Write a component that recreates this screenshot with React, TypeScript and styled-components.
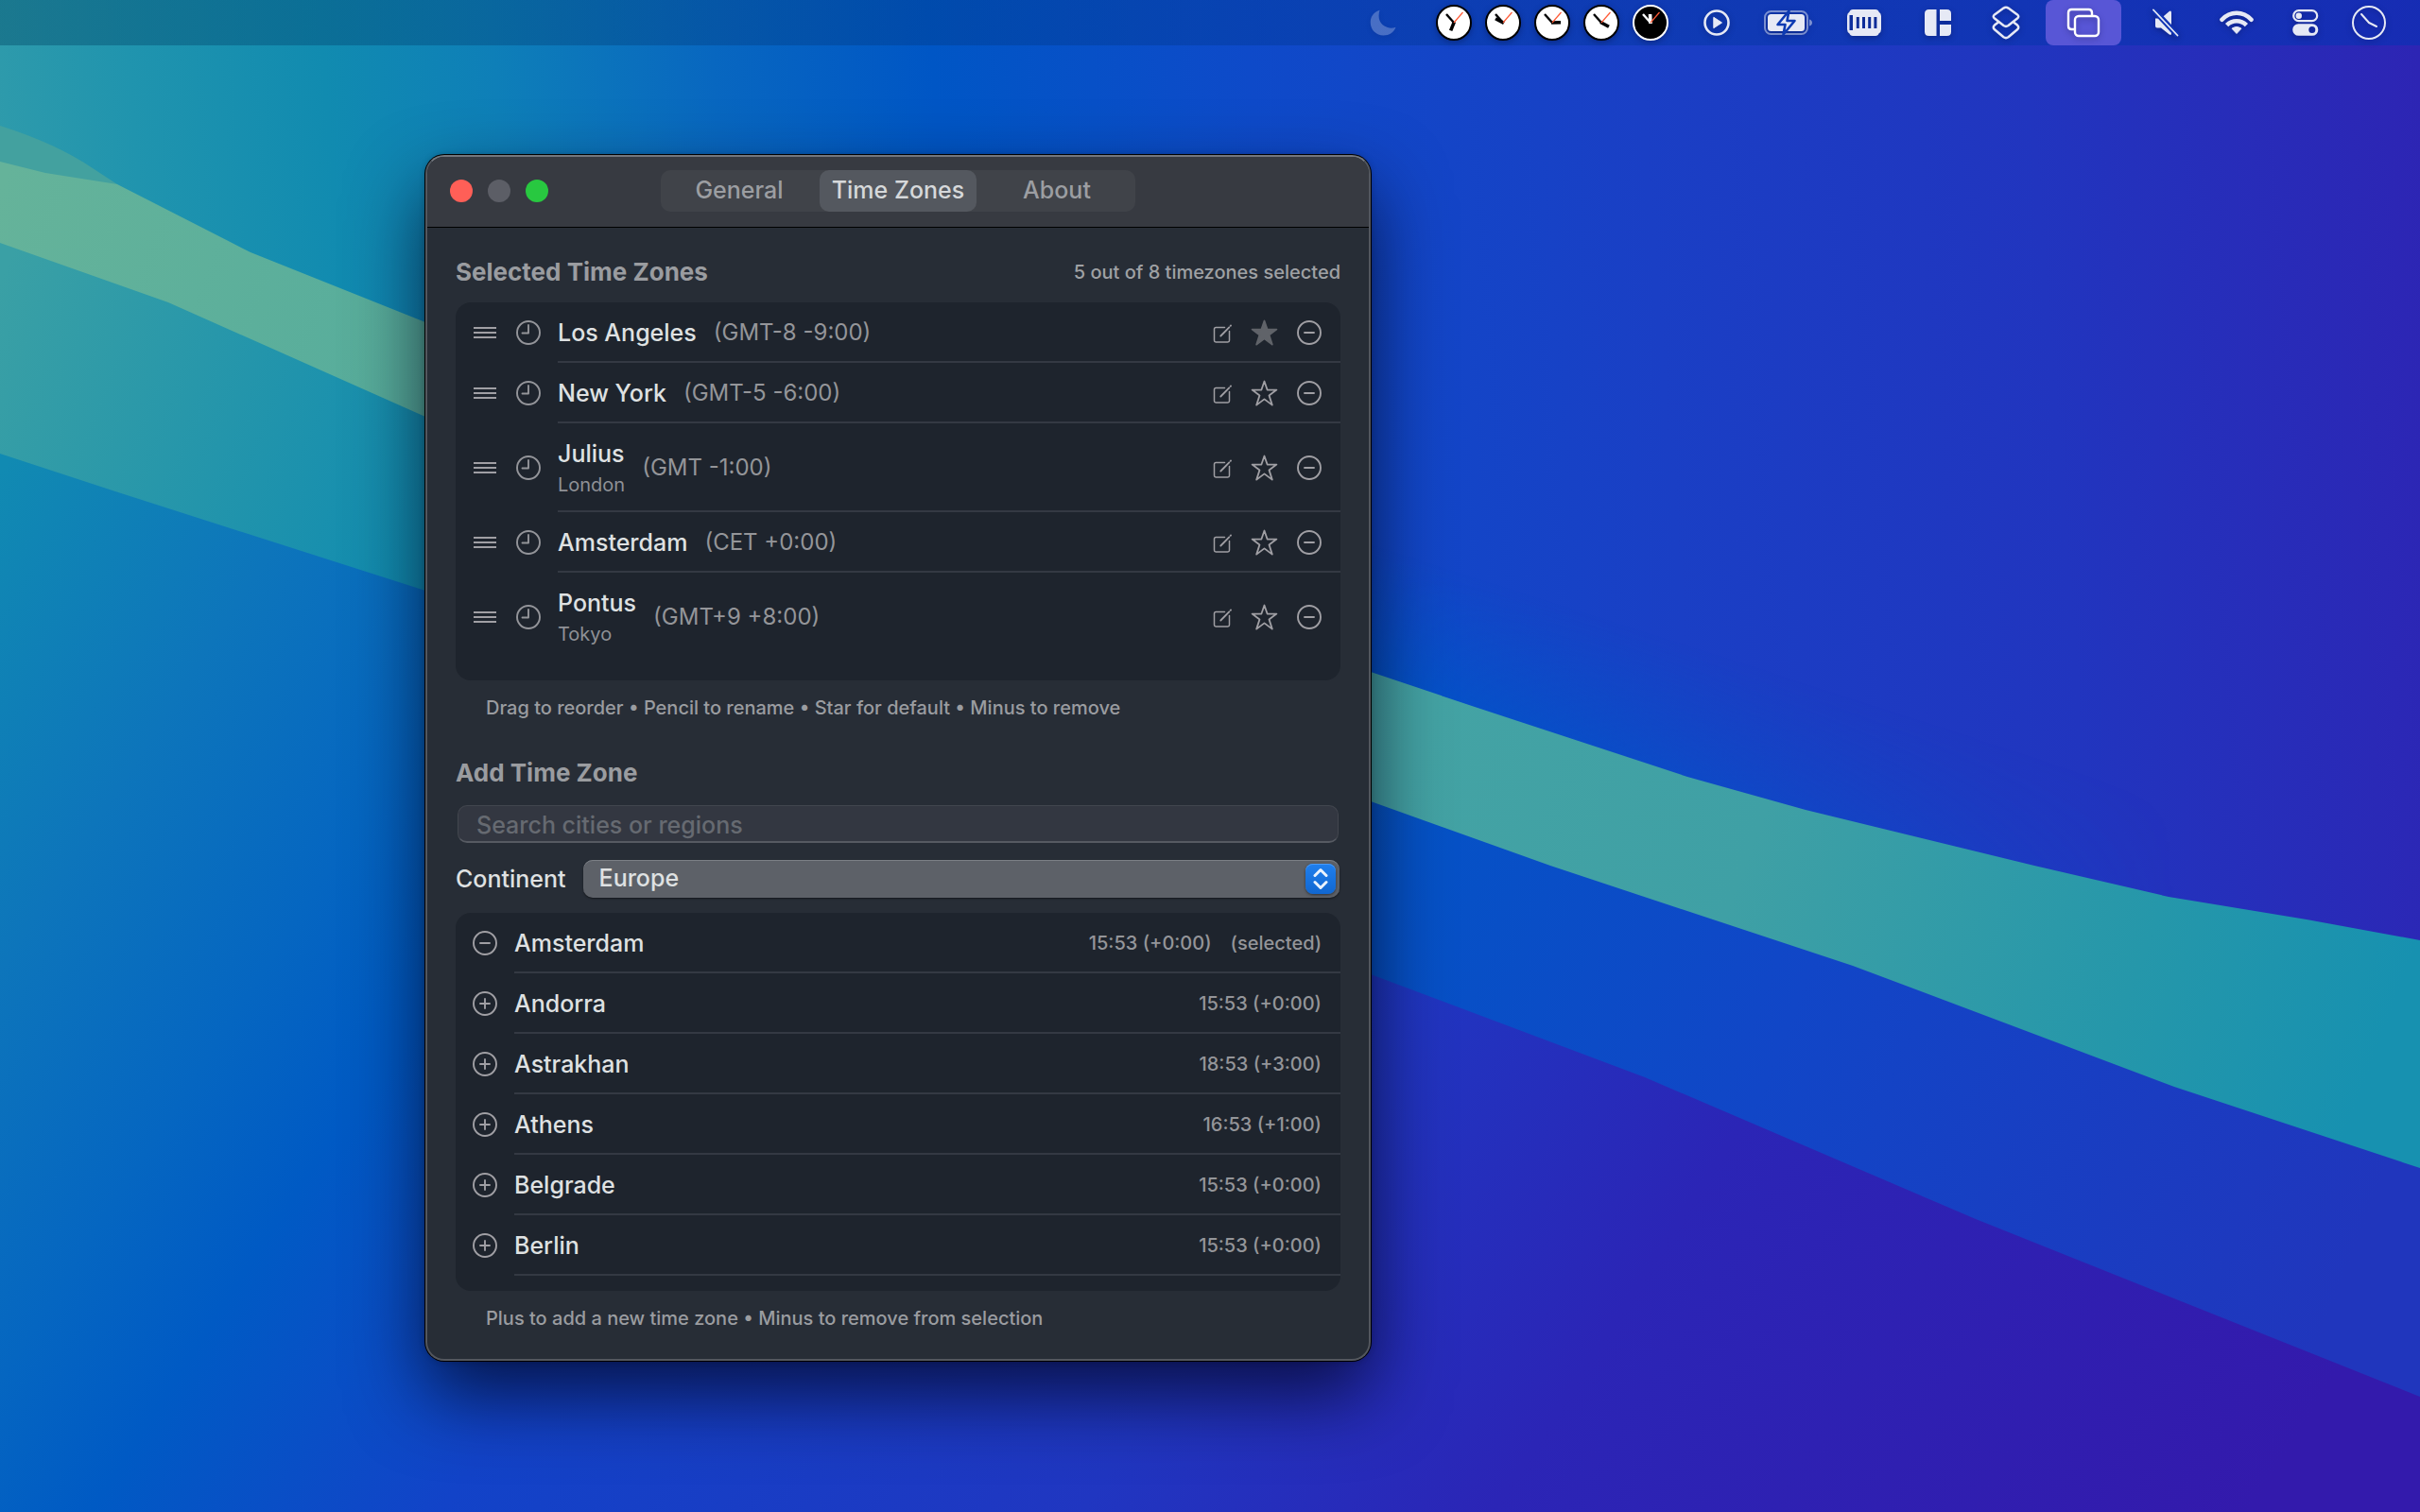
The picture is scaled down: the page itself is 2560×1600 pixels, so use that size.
import React, { useState } from "react";
import styled, { createGlobalStyle } from "styled-components";

const GlobalStyle = createGlobalStyle`
  *, *::before, *::after { box-sizing: border-box; }
  html, body { margin: 0; padding: 0; }
  body {
    font-family: Inter, "Noto Sans", sans-serif;
    font-weight: 500;
    color: #dfe1e2;
    background: #1243c8;
    -webkit-font-smoothing: antialiased;
  }
  button, input, select { font: inherit; color: inherit; margin: 0; }
`;

const Desktop = styled.div`
  position: relative;
  min-height: 100vh;
  overflow: hidden;
`;

const WallpaperArt = styled.svg`
  position: absolute;
  inset: 0;
  width: 100%;
  height: 100%;
`;

const MenuBar = styled.header`
  position: relative;
  display: flex;
  justify-content: flex-end;
  height: 48px;
  padding-right: 18px;
  background: linear-gradient(90deg, rgba(0, 70, 100, 0.4), rgba(0, 56, 120, 0.35) 30%, rgba(0, 52, 180, 0.5));
`;

const MenuItem = styled.button<{ $width: number; $dim?: boolean }>`
  display: flex;
  align-items: center;
  justify-content: center;
  width: ${(p) => p.$width}px;
  height: 48px;
  padding: 0;
  border: 0;
  background: none;
  color: #e6e9f5;
  opacity: ${(p) => (p.$dim ? 0.28 : 1)};

  svg {
    filter: drop-shadow(0 2px 3px rgba(0, 0, 30, 0.3));
  }
`;

const ActiveMenuItem = styled(MenuItem)`
  margin: 0 14px;
  border-radius: 8px;
  background: #5856d6;
  color: #fff;
`;

const ClockGroup = styled.div`
  display: flex;
  margin-right: 14px;
`;

const Window = styled.main`
  position: absolute;
  left: 450px;
  top: 164px;
  width: 1000px;
  overflow: hidden;
  border: 2px solid #53575e;
  border-top-color: #74777d;
  border-radius: 20px;
  background: #272d36;
  box-shadow: 0 0 0 1px #000, 0 0 6px rgba(0, 0, 0, 0.25), 0 36px 80px rgba(0, 0, 20, 0.7);
`;

const Toolbar = styled.div`
  display: grid;
  grid-template-columns: 1fr auto 1fr;
  align-items: center;
  height: 75px;
  padding: 0 24px 2px;
  border-bottom: 1px solid #000;
  background: #373a41;
`;

const TrafficLights = styled.div`
  display: flex;
  gap: 16px;
`;

const TrafficLight = styled.button<{ $color: string }>`
  width: 24px;
  height: 24px;
  padding: 0;
  border: 0;
  border-radius: 50%;
  background: ${(p) => p.$color};
`;

const Tabs = styled.div`
  display: grid;
  grid-template-columns: repeat(3, 166px);
  gap: 2px;
  height: 44px;
  border-radius: 10px;
  background: #404349;
`;

const Tab = styled.button<{ $active: boolean }>`
  padding: 0 0 2px;
  border: 0;
  border-radius: 10px;
  background: ${(p) => (p.$active ? "#54585f" : "none")};
  color: ${(p) => (p.$active ? "#d6d8da" : "#9c9ea2")};
  font-size: 25px;
  line-height: 32px;
  white-space: nowrap;
`;

const Content = styled.div`
  padding: 31px 30px 30px;
`;

const SectionHeader = styled.div`
  display: flex;
  align-items: center;
  justify-content: space-between;
  margin-bottom: 16px;
`;

const SectionTitle = styled.h2`
  margin: 0;
  font-size: 26px;
  line-height: 32px;
  font-weight: 700;
  color: #9a9ca0;
`;

const Caption = styled.span`
  font-size: 20px;
  line-height: 26px;
  color: #9fa1a4;
`;

const Hint = styled.p`
  margin: 16px 0 0;
  padding-left: 32px;
  font-size: 20px;
  line-height: 26px;
  color: #9a9ca0;
`;

const AddSection = styled.section`
  margin-top: 40px;
`;

const List = styled.ul`
  min-height: 400px;
  margin: 0;
  padding: 0;
  overflow: hidden;
  list-style: none;
  border-radius: 16px;
  background: #1e242d;
`;

const Row = styled.li`
  display: flex;
  align-items: stretch;
  gap: 18px;
  padding-left: 18px;
`;

const RowLead = styled.div`
  display: flex;
  align-items: center;
  gap: 20px;
`;

const RowBody = styled.div<{ $divider: boolean }>`
  display: flex;
  flex: 1;
  align-items: center;
  min-height: 64px;
  padding: 16px 20px 16px 0;
  box-shadow: ${(p) => (p.$divider ? "inset 0 -2px 0 #343943" : "none")};
`;

const ZoneLabel = styled.div`
  display: grid;
  gap: 4px;
  margin-right: 18px;
`;

const ZoneName = styled.span`
  font-size: 25px;
  line-height: 32px;
`;

const ZonePlace = styled.span`
  font-size: 20px;
  line-height: 26px;
  font-weight: 400;
  color: #8f9196;
`;

const ZoneOffset = styled.span`
  font-size: 24px;
  line-height: 32px;
  font-weight: 400;
  color: #949599;
`;

const RowActions = styled.div`
  display: flex;
  align-items: center;
  gap: 20px;
  margin-left: auto;
`;

const Times = styled(RowActions)`
  font-size: 20px;
  line-height: 26px;
  color: #949599;
`;

const IconButton = styled.button<{ $muted?: boolean }>`
  display: flex;
  padding: 0;
  border: 0;
  background: none;
  color: ${(p) => (p.$muted ? "#606369" : "#a09fa4")};
`;

const ClockBadge = styled.span`
  display: flex;
  color: #94959a;
`;

const SearchField = styled.input`
  display: block;
  width: calc(100% - 4px);
  height: 40px;
  margin: 18px 2px;
  padding: 2px 19px 0;
  border: 1px solid #42464e;
  border-bottom: 2px solid #565a62;
  border-radius: 10px;
  outline: 0;
  background: #333741;
  font-size: 25px;

  &::placeholder {
    color: #666a71;
    opacity: 1;
  }
`;

const ContinentRow = styled.div`
  display: flex;
  align-items: center;
  gap: 18px;
  margin: 0 1px 16px 0;
`;

const FieldLabel = styled.label`
  font-size: 25px;
  line-height: 32px;
`;

const SelectBox = styled.div`
  position: relative;
  flex: 1;
`;

const Select = styled.select`
  display: block;
  width: 100%;
  height: 40px;
  padding: 0 48px 2px 17px;
  border: 0;
  border-radius: 10px;
  outline: 0;
  appearance: none;
  background: #5d6168;
  box-shadow: inset 0 1px 0 #7b7f85, 0 1px 2px rgba(0, 0, 0, 0.5);
  font-size: 25px;
`;

const SelectBadge = styled.span`
  position: absolute;
  top: 4px;
  right: 4px;
  display: flex;
  align-items: center;
  justify-content: center;
  width: 32px;
  height: 32px;
  border-radius: 8px;
  background: linear-gradient(#1f7fee, #1167d0);
  box-shadow: inset 0 1px 0 #4b9af5, 0 1px 3px rgba(0, 0, 0, 0.5);
  pointer-events: none;
`;

const Wallpaper = () => (
  <WallpaperArt viewBox="0 0 2560 1600" preserveAspectRatio="none" aria-hidden="true">
    <defs>
      <linearGradient id="sky" gradientUnits="userSpaceOnUse" x1="0" y1="300" x2="2560" y2="100">
        <stop offset="0" stopColor="#2f9bab" />
        <stop offset="0.06" stopColor="#2094ae" />
        <stop offset="0.14" stopColor="#118bb0" />
        <stop offset="0.21" stopColor="#0e7fb8" />
        <stop offset="0.3" stopColor="#0867c0" />
        <stop offset="0.39" stopColor="#0056c5" />
        <stop offset="0.52" stopColor="#0e4ac9" />
        <stop offset="0.68" stopColor="#1a3fc5" />
        <stop offset="0.84" stopColor="#2135bf" />
        <stop offset="1" stopColor="#2d25b4" />
      </linearGradient>
      <linearGradient id="ground" gradientUnits="userSpaceOnUse" x1="0" y1="500" x2="2184" y2="1904">
        <stop offset="0" stopColor="#118ab2" />
        <stop offset="0.11" stopColor="#0d75bb" />
        <stop offset="0.2" stopColor="#0566c1" />
        <stop offset="0.26" stopColor="#005ac4" />
        <stop offset="0.38" stopColor="#1243c8" />
        <stop offset="0.6" stopColor="#2036c1" />
        <stop offset="0.74" stopColor="#2b25b6" />
        <stop offset="1" stopColor="#331aac" />
      </linearGradient>
      <linearGradient id="band" gradientUnits="userSpaceOnUse" x1="0" y1="300" x2="2500" y2="1300">
        <stop offset="0" stopColor="#3aa0a5" />
        <stop offset="0.19" stopColor="#118cb0" />
        <stop offset="0.4" stopColor="#0a6cc0" />
        <stop offset="0.6" stopColor="#0552c6" />
        <stop offset="0.76" stopColor="#1146c7" />
        <stop offset="1" stopColor="#2036bd" />
      </linearGradient>
      <linearGradient id="ribbon" gradientUnits="userSpaceOnUse" x1="0" y1="200" x2="2500" y2="1150">
        <stop offset="0" stopColor="#65b39a" />
        <stop offset="0.2" stopColor="#55ac9c" />
        <stop offset="0.6" stopColor="#44a3a4" />
        <stop offset="0.74" stopColor="#3fa0a5" />
        <stop offset="0.9" stopColor="#2597aa" />
        <stop offset="1" stopColor="#1791b0" />
      </linearGradient>
      <linearGradient id="glow" gradientUnits="userSpaceOnUse" x1="1700" y1="811" x2="1745" y2="670">
        <stop offset="0" stopColor="#0056c8" stopOpacity="0.85" />
        <stop offset="1" stopColor="#0056c8" stopOpacity="0" />
      </linearGradient>
      <linearGradient id="fade" gradientUnits="userSpaceOnUse" x1="1450" y1="0" x2="2300" y2="0">
        <stop offset="0" stopColor="#fff" />
        <stop offset="1" stopColor="#000" />
      </linearGradient>
      <mask id="glowMask">
        <rect width="2560" height="1600" fill="url(#fade)" />
      </mask>
    </defs>
    <rect width="2560" height="1600" fill="url(#ground)" />
    <path d="M0 0H2560V1100L1450 800L450 400L0 230Z" fill="url(#sky)" />
    <path d="M1000 400L2560 800V1100L1000 640Z" fill="url(#glow)" mask="url(#glowMask)" />
    <path d="M0 133Q60 152 98 178L124 195L0 230Z" fill="#43a19f" />
    <path d="M0 200L450 390L1450 800L2560 1180V1478L2090 1290L1740 1140L1450 1031L450 625L122 520L0 480Z" fill="url(#band)" />
    <path
      d="M0 171L48 183L124 195L265 267L450 341L900 520L1450 711L1560 748L1785 822L1910 857L2152 916L2294 949L2440 973L2560 995V1236L2300 1150L1960 1022L1640 916L1450 848L900 640L450 441L178 320L0 257Z"
      fill="url(#ribbon)"
    />
  </WallpaperArt>
);

type ClockFace = { hour: number; dark?: boolean };

const MenuClock = ({ hour, dark }: ClockFace) => {
  const ink = dark ? "#fff" : "#000";
  return (
    <svg width="38" height="38" viewBox="0 0 38 38" fill="none">
      <circle cx="19" cy="19" r="18" fill={dark ? "#000" : "#fff"} stroke={ink} strokeWidth="2" />
      <path d="M19 19L11 10" stroke={ink} strokeWidth="2.4" />
      <path d="M19 20V10" stroke={ink} strokeWidth="3.6" transform={`rotate(${hour} 19 19)`} />
      <path d="M19 19L28.500 8" stroke="#ff5a36" strokeWidth="1.2" />
    </svg>
  );
};

const MoonIcon = () => (
  <svg width="28" height="28" viewBox="0 0 28 28">
    <path d="M10.500 0.800C3.500 3.200 0.500 8.500 0.800 14.500C1.200 22 7 27.500 14.500 27.500C20.500 27.500 25.500 24.500 27.500 18.800C24.500 19.800 21.500 20 18.800 19C10.500 16.500 8 9 10.500 0.800Z" fill="currentColor" />
  </svg>
);

const PlayIcon = () => (
  <svg width="28" height="28" viewBox="0 0 28 28">
    <circle cx="14" cy="14" r="12.500" fill="none" stroke="currentColor" strokeWidth="2.600" />
    <path d="M10.800 8.300L19.500 14L10.800 19.700Z" fill="currentColor" stroke="currentColor" strokeLinejoin="round" />
  </svg>
);

const BatteryIcon = () => (
  <svg width="52" height="28" viewBox="0 0 52 28">
    <rect x="1" y="2" width="45" height="24" rx="6.500" fill="none" stroke="currentColor" strokeOpacity="0.5" strokeWidth="2" />
    <path d="M48 10.500Q51 11.500 51 14T48 17.500Z" fill="currentColor" fillOpacity="0.5" />
    <rect x="4" y="5" width="39" height="18" rx="3.500" fill="currentColor" />
    <path d="M26.500 1.500L14.500 16H22.500L20.500 26.500L32.500 12H24.500Z" fill="currentColor" stroke="#0d3ab2" strokeWidth="2.600" strokeLinejoin="round" />
  </svg>
);

const MemoryIcon = () => (
  <svg width="36" height="28" viewBox="0 0 36 28">
    <path fillRule="evenodd" fill="currentColor" d="M6 0H30C32 0 33 1 33.500 2.500Q36 4 36 7V21Q36 24 33.500 25.500C33 27 32 28 30 28H6C4 28 3 27 2.500 25.500Q0 24 0 21V7Q0 4 2.500 2.500C3 1 4 0 6 0ZM2.500 6V22H6V6ZM9.800 8V20H12.800V8ZM16 8V20H19V8ZM22.200 8V20H25.200V8ZM28.400 8V20H31.400V8Z" />
  </svg>
);

const LayoutIcon = () => (
  <svg width="28" height="28" viewBox="0 0 28 28" fill="currentColor">
    <path d="M4.500 0H12.500V28H4.500Q0 28 0 23.500V4.500Q0 0 4.500 0Z" />
    <path d="M16 0H23.500Q28 0 28 4.500V12H16Z" />
    <path d="M16 16H28V23.500Q28 28 23.500 28H16Z" />
  </svg>
);

const ShortcutsIcon = () => (
  <svg width="30" height="36" viewBox="0 0 30 36" fill="none" stroke="currentColor" strokeWidth="2.500" strokeLinejoin="round">
    <path d="M12.500 2.600Q15 1 17.500 2.600L27 9.400Q29.500 11.500 27 13.600L17.500 21Q15 22.800 12.500 21L3 13.600Q0.500 11.500 3 9.400Z" />
    <path d="M7 17.500L3 20.600Q0.500 23 3 25.200L12.500 33.200Q15 35 17.500 33.200L27 25.200Q29.500 23 27 20.600L23 17.500" />
  </svg>
);

const WindowsIcon = () => (
  <svg width="36" height="32" viewBox="0 0 36 32" fill="none" stroke="currentColor" strokeWidth="2.400">
    <path d="M8.500 23H5.500Q2 23 2 19.500V5.500Q2 2 5.500 2H23.500Q27 2 27 5.500V8.500" />
    <rect x="9" y="9" width="25" height="21" rx="4" />
  </svg>
);

const MutedIcon = () => (
  <svg width="28" height="30" viewBox="0 0 28 30">
    <path d="M3 10.500H9L17.500 3.200Q20 1.500 20 4.500V26.500Q20 29 17.500 27.300L9 20.500H5Q3 20.500 3 18.500Z" fill="currentColor" />
    <path d="M0.500 0.500L27 29" stroke="#1034b4" strokeWidth="6" />
    <path d="M1 1.500L26.500 28.500" stroke="currentColor" strokeWidth="1.800" strokeLinecap="round" />
  </svg>
);

const WifiIcon = () => (
  <svg width="36" height="28" viewBox="0 0 36 28" fill="none" stroke="currentColor" strokeWidth="4.600">
    <path d="M2.500 10.800Q9 3.800 18 3.800T33.500 10.800" strokeLinecap="round" />
    <path d="M7.600 16.600Q12 12.200 18 12.200T28.400 16.600" />
    <path d="M13 20.200Q18 16.800 23 20.200L18 25.500Z" fill="currentColor" stroke="currentColor" strokeWidth="1" strokeLinejoin="round" />
  </svg>
);

const ControlCenterIcon = () => (
  <svg width="28" height="28" viewBox="0 0 28 28">
    <rect x="1.200" y="1.200" width="25" height="11" rx="5.500" fill="none" stroke="currentColor" strokeWidth="2.200" />
    <circle cx="6.800" cy="6.700" r="3.200" fill="currentColor" />
    <path fillRule="evenodd" fill="currentColor" d="M6.500 15.200H21A6.300 6.300 0 0 1 21 27.800H6.500A6.300 6.300 0 0 1 6.500 15.200ZM20.800 18A3.500 3.500 0 1 0 20.800 25A3.500 3.500 0 1 0 20.800 18Z" />
  </svg>
);

const OutlineClockIcon = () => (
  <svg width="38" height="38" viewBox="0 0 38 38" fill="none" stroke="currentColor" strokeLinecap="round">
    <circle cx="19" cy="19" r="17" strokeWidth="2" />
    <path d="M11 10L19 19L27 23" strokeWidth="2" strokeLinejoin="round" />
  </svg>
);

const HandleIcon = () => (
  <svg width="26" height="26" viewBox="0 0 26 26" fill="currentColor">
    <path d="M1 7H25V9H1ZM1 12H25V14H1ZM1 17H25V19H1Z" />
  </svg>
);

const ZoneClockIcon = () => (
  <svg width="26" height="26" viewBox="0 0 26 26" fill="none" stroke="currentColor" strokeWidth="1.900">
    <circle cx="13" cy="13" r="12" />
    <path d="M13 5V13.500H6.500" strokeLinejoin="round" strokeLinecap="round" />
  </svg>
);

const EditIcon = () => (
  <svg width="20" height="26" viewBox="0 0 20 26" fill="none" stroke="currentColor" strokeWidth="1.500" strokeLinecap="round">
    <path d="M12.500 7.500H3.200Q1.500 7.500 1.500 9.200V21.300Q1.500 23 3.200 23H15.800Q17.500 23 17.500 21.300V11.500" />
    <path d="M8.300 16.500L17.300 7.300" strokeWidth="1.800" />
    <path d="M18.700 5.800L19 5.500" strokeWidth="1.800" />
  </svg>
);

const StarIcon = ({ filled }: { filled: boolean }) => (
  <svg width="29" height="28" viewBox="0 0 28 28" fill={filled ? "currentColor" : "none"} stroke="currentColor" strokeWidth="1.800" strokeLinejoin="round">
    <path d="M14 1.500L17.100 10.500L26.900 10.600L19 16.400L22.300 26.600L14 20.400L5.700 26.600L9 16.400L1.100 10.600L10.900 10.500Z" />
  </svg>
);

const CircleSignIcon = ({ plus }: { plus?: boolean }) => (
  <svg width="26" height="26" viewBox="0 0 26 26" fill="none" stroke="currentColor" strokeWidth="1.900" strokeLinecap="round">
    <circle cx="13" cy="13" r="12" />
    <path d={plus ? "M8 13H18M13 8V18" : "M8 13H18"} />
  </svg>
);

const ChevronsIcon = () => (
  <svg width="16" height="24" viewBox="0 0 16 24" fill="none" stroke="#e9f2fd" strokeWidth="3" strokeLinecap="round" strokeLinejoin="round">
    <path d="M2 8.500L8 2.500L14 8.500M2 15.500L8 21.500L14 15.500" />
  </svg>
);

const menuClocks: (ClockFace & { city: string })[] = [
  { city: "Los Angeles", hour: 202 },
  { city: "New York", hour: 298 },
  { city: "London", hour: 88 },
  { city: "Amsterdam", hour: 118 },
  { city: "Tokyo", hour: -3, dark: true },
];

const selectedZones = [
  { name: "Los Angeles", offset: "(GMT-8 -9:00)", isDefault: true },
  { name: "New York", offset: "(GMT-5 -6:00)" },
  { name: "Julius", place: "London", offset: "(GMT -1:00)" },
  { name: "Amsterdam", offset: "(CET +0:00)" },
  { name: "Pontus", place: "Tokyo", offset: "(GMT+9 +8:00)" },
];

const cities = [
  { name: "Amsterdam", time: "15:53 (+0:00)", selected: true },
  { name: "Andorra", time: "15:53 (+0:00)" },
  { name: "Astrakhan", time: "18:53 (+3:00)" },
  { name: "Athens", time: "16:53 (+1:00)" },
  { name: "Belgrade", time: "15:53 (+0:00)" },
  { name: "Berlin", time: "15:53 (+0:00)" },
];

const tabs = ["General", "Time Zones", "About"];

export default function App() {
  const [tab, setTab] = useState("Time Zones");
  const [query, setQuery] = useState("");

  return (
    <Desktop>
      <GlobalStyle />
      <Wallpaper />
      <MenuBar>
        <MenuItem $width={98} $dim aria-label="Focus"><MoonIcon /></MenuItem>
        <ClockGroup>
          {menuClocks.map((c) => (
            <MenuItem key={c.city} $width={52} aria-label={c.city}>
              <MenuClock hour={c.hour} dark={c.dark} />
            </MenuItem>
          ))}
        </ClockGroup>
        <MenuItem $width={60} aria-label="Now Playing"><PlayIcon /></MenuItem>
        <MenuItem $width={92} aria-label="Battery"><BatteryIcon /></MenuItem>
        <MenuItem $width={68} aria-label="Memory"><MemoryIcon /></MenuItem>
        <MenuItem $width={88} aria-label="Window layout"><LayoutIcon /></MenuItem>
        <MenuItem $width={56} aria-label="Shortcuts"><ShortcutsIcon /></MenuItem>
        <ActiveMenuItem $width={80} aria-label="Screen mirroring"><WindowsIcon /></ActiveMenuItem>
        <MenuItem $width={66} aria-label="Sound"><MutedIcon /></MenuItem>
        <MenuItem $width={84} aria-label="Wi-Fi"><WifiIcon /></MenuItem>
        <MenuItem $width={62} aria-label="Control Center"><ControlCenterIcon /></MenuItem>
        <MenuItem $width={72} aria-label="Clock"><OutlineClockIcon /></MenuItem>
      </MenuBar>

      <Window>
        <Toolbar>
          <TrafficLights>
            <TrafficLight $color="#ff5f57" aria-label="Close" />
            <TrafficLight $color="#5c5e66" aria-label="Minimize" />
            <TrafficLight $color="#28c840" aria-label="Zoom" />
          </TrafficLights>
          <Tabs role="tablist">
            {tabs.map((t) => (
              <Tab key={t} role="tab" aria-selected={t === tab} $active={t === tab} onClick={() => setTab(t)}>
                {t}
              </Tab>
            ))}
          </Tabs>
        </Toolbar>

        <Content>
          <section>
            <SectionHeader>
              <SectionTitle>Selected Time Zones</SectionTitle>
              <Caption>5 out of 8 timezones selected</Caption>
            </SectionHeader>
            <List>
              {selectedZones.map((z, i) => (
                <Row key={z.name}>
                  <RowLead>
                    <IconButton aria-label={`Reorder ${z.name}`}><HandleIcon /></IconButton>
                    <ClockBadge><ZoneClockIcon /></ClockBadge>
                  </RowLead>
                  <RowBody $divider={i < selectedZones.length - 1}>
                    <ZoneLabel>
                      <ZoneName>{z.name}</ZoneName>
                      {z.place && <ZonePlace>{z.place}</ZonePlace>}
                    </ZoneLabel>
                    <ZoneOffset>{z.offset}</ZoneOffset>
                    <RowActions>
                      <IconButton aria-label={`Rename ${z.name}`}><EditIcon /></IconButton>
                      <IconButton $muted={z.isDefault} aria-label={`Make ${z.name} default`}>
                        <StarIcon filled={!!z.isDefault} />
                      </IconButton>
                      <IconButton aria-label={`Remove ${z.name}`}><CircleSignIcon /></IconButton>
                    </RowActions>
                  </RowBody>
                </Row>
              ))}
            </List>
            <Hint>Drag to reorder • Pencil to rename • Star for default • Minus to remove</Hint>
          </section>

          <AddSection>
            <SectionTitle>Add Time Zone</SectionTitle>
            <SearchField
              type="text"
              aria-label="Search cities or regions"
              placeholder="Search cities or regions"
              value={query}
              onChange={(e) => setQuery(e.target.value)}
            />
            <ContinentRow>
              <FieldLabel htmlFor="continent">Continent</FieldLabel>
              <SelectBox>
                <Select id="continent" defaultValue="Europe">
                  <option>Europe</option>
                </Select>
                <SelectBadge><ChevronsIcon /></SelectBadge>
              </SelectBox>
            </ContinentRow>
            <List>
              {cities.map((c) => (
                <Row key={c.name}>
                  <RowLead>
                    <IconButton aria-label={`${c.selected ? "Remove" : "Add"} ${c.name}`}>
                      <CircleSignIcon plus={!c.selected} />
                    </IconButton>
                  </RowLead>
                  <RowBody $divider>
                    <ZoneName>{c.name}</ZoneName>
                    <Times>
                      <span>{c.time}</span>
                      {c.selected && <span>(selected)</span>}
                    </Times>
                  </RowBody>
                </Row>
              ))}
            </List>
            <Hint>Plus to add a new time zone • Minus to remove from selection</Hint>
          </AddSection>
        </Content>
      </Window>
    </Desktop>
  );
}
